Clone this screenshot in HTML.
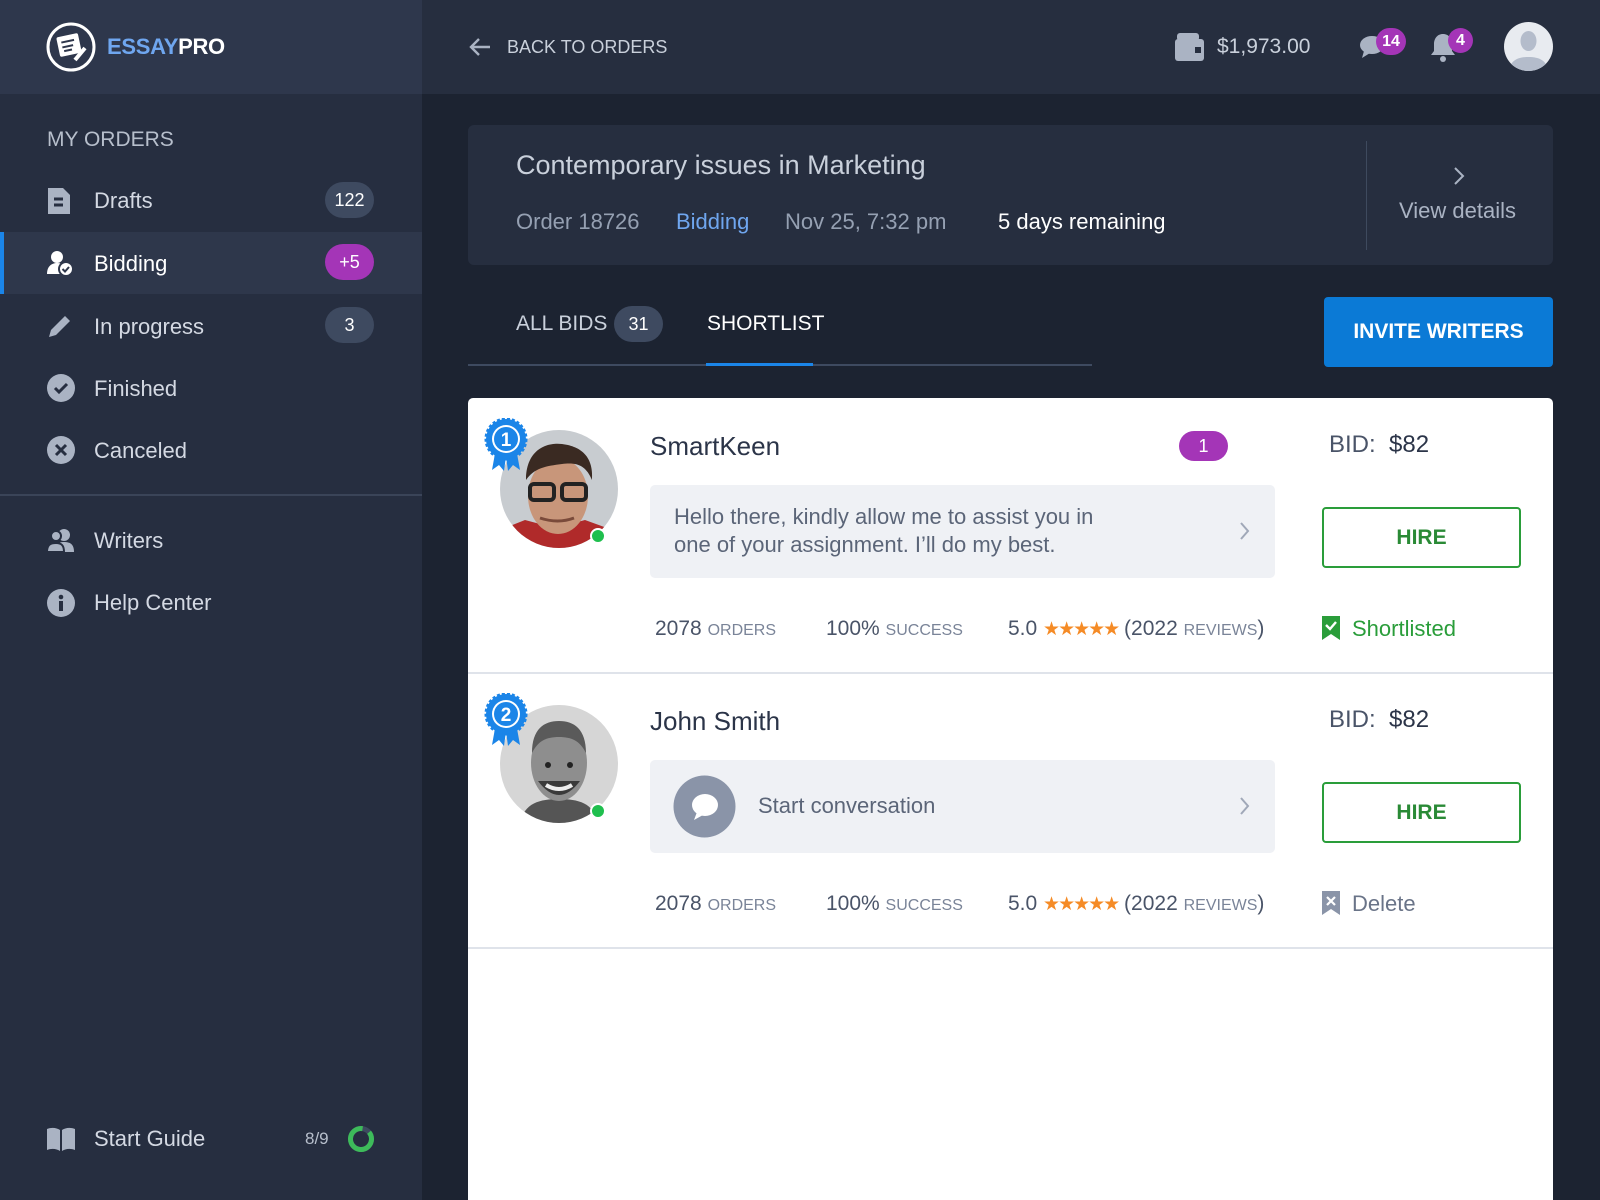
<!DOCTYPE html>
<html><head><meta charset="utf-8"><style>
*{margin:0;padding:0;box-sizing:border-box}
html,body{width:1600px;height:1200px;overflow:hidden}
body{background:#1c2331;font-family:"Liberation Sans",sans-serif;position:relative}
.a{position:absolute;white-space:nowrap}
.side{position:absolute;left:0;top:0;width:422px;height:1200px;background:#262e40}
.mi{position:absolute;left:94px;font-size:22px;color:#d4d9e3;transform:translateY(-50%)}
.bdg{position:absolute;left:325px;width:49px;height:36px;border-radius:18px;background:#3e4a60;color:#fff;font-size:18px;text-align:center;line-height:36px;transform:translateY(-50%)}
.ic{position:absolute;left:47px;transform:translateY(-50%)}
.st{font-size:21px;color:#4a5468}
.st span.s{font-size:16px;color:#7a8498}
</style></head><body>
<div class="side"></div>
<div class="a" style="left:0;top:0;width:422px;height:94px;background:#2e374c"></div>
<div class="a" style="left:422px;top:0;width:1178px;height:94px;background:#262e3f"></div>
<svg class="a" style="left:46px;top:22px" width="50" height="50" viewBox="0 0 50 50"><circle cx="25" cy="25" r="23" fill="none" stroke="#fff" stroke-width="3"/><rect x="12" y="13" width="22" height="20" rx="2" fill="#fff" transform="rotate(-12 23 23)"/><path d="M16 19h13M16 24h11M17 28h8" stroke="#2e374c" stroke-width="2" transform="rotate(-12 23 23)"/><path d="M29 38l10-12" stroke="#fff" stroke-width="4"/></svg>
<div class="a" style="left:107px;top:34px;font-size:22px;font-weight:bold;letter-spacing:-0.3px"><span style="color:#6fa6ef">ESSAY</span><span style="color:#fff">PRO</span></div>
<div class="a" style="left:47px;top:128px;font-size:21px;color:#b7bfcc">MY ORDERS</div>
<div class="a" style="left:0;top:232px;width:422px;height:62px;background:#2e374b"></div>
<div class="a" style="left:0;top:232px;width:4px;height:62px;background:#1b85e8"></div>
<svg class="ic" style="top:201px" width="24" height="28" viewBox="0 0 24 28"><path d="M1 1h15l7 7v19H1z" fill="#aab3c3"/><path d="M7 12h9M7 18h9" stroke="#262e40" stroke-width="3"/></svg>
<div class="mi" style="top:201px">Drafts</div><div class="bdg" style="top:200px">122</div>
<svg class="ic" style="top:263px" width="26" height="26" viewBox="0 0 26 26"><circle cx="10" cy="7" r="6" fill="#fff"/><path d="M0 24c0-8 5-11 10-11s7 2 7 2v9z" fill="#fff"/><circle cx="19" cy="19" r="7" fill="#fff" stroke="#2e374b" stroke-width="2"/><path d="M15.5 19l2.5 2.5 4-4.5" stroke="#2e374b" stroke-width="2" fill="none"/></svg>
<div class="mi" style="top:264px;color:#fff">Bidding</div><div class="bdg" style="top:262px;background:#a435b7">+5</div>
<svg class="ic" style="top:326px" width="26" height="26" viewBox="0 0 26 26"><path d="M2 24l2-7L18 3l5 5L9 22z" fill="#aab3c3"/></svg>
<div class="mi" style="top:327px">In progress</div><div class="bdg" style="top:325px">3</div>
<svg class="ic" style="top:388px" width="28" height="28" viewBox="0 0 28 28"><circle cx="14" cy="14" r="14" fill="#aab3c3"/><path d="M8 14l4 4 8-8" stroke="#262e40" stroke-width="3" fill="none"/></svg>
<div class="mi" style="top:389px">Finished</div>
<svg class="ic" style="top:450px" width="28" height="28" viewBox="0 0 28 28"><circle cx="14" cy="14" r="14" fill="#aab3c3"/><path d="M9 9l10 10M19 9L9 19" stroke="#262e40" stroke-width="3"/></svg>
<div class="mi" style="top:451px">Canceled</div>
<div class="a" style="left:0;top:494px;width:422px;height:2px;background:#3a4458"></div>
<svg class="ic" style="top:540px" width="28" height="24" viewBox="0 0 28 24"><circle cx="17" cy="7" r="6" fill="#aab3c3"/><path d="M7 24c0-8 4-10 10-10s10 2 10 10z" fill="#aab3c3"/><circle cx="9" cy="8" r="5" fill="#aab3c3" stroke="#262e40" stroke-width="2"/><path d="M0 24c0-7 3-9 9-9s8 3 8 9z" fill="#aab3c3" stroke="#262e40" stroke-width="2"/></svg>
<div class="mi" style="top:541px">Writers</div>
<svg class="ic" style="top:603px" width="28" height="28" viewBox="0 0 28 28"><circle cx="14" cy="14" r="14" fill="#aab3c3"/><rect x="12" y="12" width="4" height="10" fill="#262e40"/><circle cx="14" cy="8" r="2.3" fill="#262e40"/></svg>
<div class="mi" style="top:603px">Help Center</div>
<svg class="ic" style="top:1139px" width="28" height="24" viewBox="0 0 28 24"><path d="M0 2c5-2 10-1 13 1v21c-3-2-8-3-13-1zM15 3c3-2 8-3 13-1v21c-5-2-10-1-13 1z" fill="#aab3c3"/></svg>
<div class="mi" style="top:1139px">Start Guide</div>
<div class="a" style="left:305px;top:1129px;font-size:17px;color:#b7bfcc">8/9</div>
<svg class="a" style="left:347px;top:1125px" width="28" height="28" viewBox="0 0 28 28"><circle cx="14" cy="14" r="10.5" fill="none" stroke="#3e4a60" stroke-width="5"/><circle cx="14" cy="14" r="10.5" fill="none" stroke="#3dbb5a" stroke-width="5" stroke-dasharray="58 66" transform="rotate(-40 14 14)"/></svg>
<svg class="a" style="left:468px;top:37px" width="24" height="20" viewBox="0 0 24 20"><path d="M22 10H3M11 2L3 10l8 8" stroke="#aab3c3" stroke-width="2.4" fill="none"/></svg>
<div class="a" style="left:507px;top:37px;font-size:18px;color:#c9d0db">BACK TO ORDERS</div>
<svg class="a" style="left:1175px;top:33px" width="29" height="28" viewBox="0 0 29 28"><rect x="0" y="6" width="29" height="22" rx="3" fill="#aab3c3"/><rect x="2" y="0" width="22" height="8" rx="3" fill="#aab3c3"/><rect x="20" y="14" width="6" height="6" fill="#262e3f"/></svg>
<div class="a" style="left:1217px;top:35px;font-size:21px;color:#c9d0db">$1,973.00</div>
<svg class="a" style="left:1359px;top:33px" width="26" height="26" viewBox="0 0 26 26"><ellipse cx="13" cy="12" rx="12" ry="9" fill="#aab3c3"/><path d="M5 18l-2 7 8-5z" fill="#aab3c3"/></svg>
<div class="a" style="left:1376px;top:28px;width:30px;height:27px;border-radius:14px;background:#a435b7;color:#fff;font-size:16px;font-weight:bold;text-align:center;line-height:27px">14</div>
<svg class="a" style="left:1430px;top:32px" width="26" height="30" viewBox="0 0 26 30"><path d="M13 2c-6 0-9 5-9 10v7l-3 4h24l-3-4v-7c0-5-3-10-9-10z" fill="#aab3c3"/><circle cx="13" cy="27" r="3" fill="#aab3c3"/></svg>
<div class="a" style="left:1448px;top:28px;width:25px;height:25px;border-radius:13px;background:#a435b7;color:#fff;font-size:16px;font-weight:bold;text-align:center;line-height:25px">4</div>
<svg class="a" style="left:1503px;top:21px" width="51" height="51" viewBox="0 0 51 51"><defs><clipPath id="cc"><circle cx="25.5" cy="25.5" r="24.5"/></clipPath></defs><circle cx="25.5" cy="25.5" r="24.5" fill="#e8ebf0"/><g clip-path="url(#cc)" fill="#b4bccb"><ellipse cx="25.5" cy="20" rx="8" ry="10"/><path d="M6 52c0-12 8-16 19.5-16S45 40 45 52z"/></g></svg>
<div class="a" style="left:468px;top:125px;width:1085px;height:140px;border-radius:6px;background:#262e3f"></div>
<div class="a" style="left:516px;top:150px;font-size:27px;color:#c9d0db">Contemporary issues in Marketing</div>
<div class="a" style="left:516px;top:209px;font-size:22px;color:#95a0b2">Order 18726</div>
<div class="a" style="left:676px;top:209px;font-size:22px;color:#6fa6ef">Bidding</div>
<div class="a" style="left:785px;top:209px;font-size:22px;color:#95a0b2">Nov 25, 7:32 pm</div>
<div class="a" style="left:998px;top:209px;font-size:22px;color:#fff">5 days remaining</div>
<div class="a" style="left:1366px;top:141px;width:1px;height:109px;background:#3e4a5e"></div>
<svg class="a" style="left:1452px;top:165px" width="14" height="22" viewBox="0 0 14 22"><path d="M3 3l8 8-8 8" stroke="#aab3c3" stroke-width="2" fill="none"/></svg>
<div class="a" style="left:1399px;top:198px;font-size:22px;color:#aab3c3">View details</div>
<div class="a" style="left:516px;top:312px;font-size:21px;color:#c9d0db">ALL BIDS</div>
<div class="a" style="left:614px;top:306px;width:49px;height:36px;border-radius:18px;background:#3e4a60;color:#fff;font-size:18px;text-align:center;line-height:36px">31</div>
<div class="a" style="left:707px;top:312px;font-size:21px;color:#fff">SHORTLIST</div>
<div class="a" style="left:468px;top:364px;width:624px;height:2px;background:#3e4a60"></div>
<div class="a" style="left:706px;top:363px;width:107px;height:3px;background:#1b85e8"></div>
<div class="a" style="left:1324px;top:297px;width:229px;height:70px;border-radius:4px;background:#0b7ad6;color:#fff;font-size:21px;font-weight:bold;text-align:center;line-height:70px">INVITE WRITERS</div>
<div class="a" style="left:468px;top:398px;width:1085px;height:820px;border-radius:5px;background:#fff"></div>
<div class="a" style="left:468px;top:672px;width:1085px;height:2px;background:#dfe3ea"></div>
<div class="a" style="left:468px;top:947px;width:1085px;height:2px;background:#dfe3ea"></div>

<svg class="a" style="left:500px;top:430px" width="118" height="118" viewBox="0 0 118 118"><defs><clipPath id="a1"><circle cx="59" cy="59" r="59"/></clipPath></defs><g clip-path="url(#a1)"><rect width="118" height="118" fill="#c8ccd0"/><path d="M0 118V100l25-10 30 8 30-8 33 12v16z" fill="#b02a2a"/><ellipse cx="58" cy="66" rx="30" ry="38" fill="#c8967a"/><path d="M26 50c0-30 20-38 36-36s32 10 30 36c-6-14-14-18-30-16s-28 4-36 16z" fill="#3a2a22"/><rect x="30" y="54" width="24" height="16" rx="4" fill="none" stroke="#222" stroke-width="4"/><rect x="62" y="54" width="24" height="16" rx="4" fill="none" stroke="#222" stroke-width="4"/><path d="M40 88q18 6 34 0" stroke="#7a4a3a" stroke-width="3" fill="none"/></g></svg>
<div class="a" style="left:590px;top:528px;width:16px;height:16px;border-radius:50%;background:#1fbf4e;border:2px solid #fff"></div>
<svg class="a" style="left:500px;top:705px" width="118" height="118" viewBox="0 0 118 118"><defs><clipPath id="a2"><circle cx="59" cy="59" r="59"/></clipPath></defs><g clip-path="url(#a2)"><rect width="118" height="118" fill="#d6d6d6"/><path d="M20 118c4-20 20-24 39-24s35 4 39 24z" fill="#555"/><ellipse cx="59" cy="58" rx="28" ry="38" fill="#8e8e8e"/><path d="M32 48c0-24 12-32 27-32s27 8 27 32c-6-12-14-16-27-16s-21 4-27 16z" fill="#5a5a5a"/><path d="M38 76q21 28 42 0" fill="#3a3a3a"/><path d="M46 80q13 8 26 0" stroke="#eee" stroke-width="4" fill="none"/><circle cx="48" cy="60" r="3" fill="#222"/><circle cx="70" cy="60" r="3" fill="#222"/></g></svg>
<div class="a" style="left:590px;top:803px;width:16px;height:16px;border-radius:50%;background:#1fbf4e;border:2px solid #fff"></div>

<svg class="a" style="left:484px;top:418px" width="44" height="54" viewBox="0 0 44 54"><path d="M12 30l-4 22 7-5 5 6 3-22zM32 30l4 22-7-5-5 6-3-22z" fill="#1b85e8"/><circle cx="22" cy="21" r="20" fill="#1b85e8" stroke="#1b85e8" stroke-width="3" stroke-dasharray="3 2"/><circle cx="22" cy="21" r="14" fill="#fff"/><circle cx="22" cy="21" r="12" fill="#1b85e8"/><text x="22" y="28" font-size="19" font-weight="bold" fill="#fff" text-anchor="middle" font-family="Liberation Sans">1</text></svg>
<svg class="a" style="left:484px;top:693px" width="44" height="54" viewBox="0 0 44 54"><path d="M12 30l-4 22 7-5 5 6 3-22zM32 30l4 22-7-5-5 6-3-22z" fill="#1b85e8"/><circle cx="22" cy="21" r="20" fill="#1b85e8" stroke="#1b85e8" stroke-width="3" stroke-dasharray="3 2"/><circle cx="22" cy="21" r="14" fill="#fff"/><circle cx="22" cy="21" r="12" fill="#1b85e8"/><text x="22" y="28" font-size="19" font-weight="bold" fill="#fff" text-anchor="middle" font-family="Liberation Sans">2</text></svg>

<div class="a" style="left:650px;top:431px;font-size:26px;color:#2b3448">SmartKeen</div>
<div class="a" style="left:1179px;top:431px;width:49px;height:30px;border-radius:15px;background:#a435b7;color:#fff;font-size:18px;text-align:center;line-height:30px">1</div>
<div class="a" style="left:1329px;top:431px;font-size:24px;color:#4a5468">BID:&nbsp; <span style="color:#2b3448">$82</span></div>
<div class="a" style="left:650px;top:485px;width:625px;height:93px;border-radius:5px;background:#eff1f5"></div>
<div class="a" style="left:674px;top:503px;font-size:22px;color:#5b6578;line-height:28px">Hello there, kindly allow me to assist you in<br>one of your assignment. I’ll do my best.</div>
<svg class="a" style="left:1239px;top:521px" width="12" height="20" viewBox="0 0 12 20"><path d="M2 2l7 8-7 8" stroke="#a0a8b8" stroke-width="2" fill="none"/></svg>
<div class="a" style="left:1322px;top:507px;width:199px;height:61px;border:2px solid #2a9d3a;border-radius:4px;color:#2a8a36;font-size:21px;font-weight:bold;text-align:center;line-height:57px">HIRE</div>
<div class="a st" style="left:655px;top:617px">2078 <span class="s">ORDERS</span></div>
<div class="a st" style="left:826px;top:617px">100% <span class="s">SUCCESS</span></div>
<div class="a st" style="left:1008px;top:617px">5.0 <span style="color:#f58b26;font-size:19px;letter-spacing:-2px">★★★★★</span> (2022 <span class="s">REVIEWS</span>)</div>
<svg class="a" style="left:1322px;top:616px" width="18" height="24" viewBox="0 0 18 24"><path d="M0 0h18v24l-9-6-9 6z" fill="#2a9d3a"/><path d="M4 9l4 4 6-7" stroke="#fff" stroke-width="2.4" fill="none"/></svg>
<div class="a" style="left:1352px;top:616px;font-size:22px;color:#2a9d3a">Shortlisted</div>

<div class="a" style="left:650px;top:706px;font-size:26px;color:#2b3448">John Smith</div>
<div class="a" style="left:1329px;top:706px;font-size:24px;color:#4a5468">BID:&nbsp; <span style="color:#2b3448">$82</span></div>
<div class="a" style="left:650px;top:760px;width:625px;height:93px;border-radius:5px;background:#eff1f5"></div>
<svg class="a" style="left:673px;top:775px" width="63" height="63" viewBox="0 0 63 63"><circle cx="31.5" cy="31.5" r="31" fill="#8a94a8"/><ellipse cx="32" cy="30" rx="13" ry="11" fill="#fff"/><path d="M24 37l-3 8 9-5z" fill="#fff"/></svg>
<div class="a" style="left:758px;top:793px;font-size:22px;color:#5b6578">Start conversation</div>
<svg class="a" style="left:1239px;top:796px" width="12" height="20" viewBox="0 0 12 20"><path d="M2 2l7 8-7 8" stroke="#a0a8b8" stroke-width="2" fill="none"/></svg>
<div class="a" style="left:1322px;top:782px;width:199px;height:61px;border:2px solid #2a9d3a;border-radius:4px;color:#2a8a36;font-size:21px;font-weight:bold;text-align:center;line-height:57px">HIRE</div>
<div class="a st" style="left:655px;top:892px">2078 <span class="s">ORDERS</span></div>
<div class="a st" style="left:826px;top:892px">100% <span class="s">SUCCESS</span></div>
<div class="a st" style="left:1008px;top:892px">5.0 <span style="color:#f58b26;font-size:19px;letter-spacing:-2px">★★★★★</span> (2022 <span class="s">REVIEWS</span>)</div>
<svg class="a" style="left:1322px;top:891px" width="18" height="24" viewBox="0 0 18 24"><path d="M0 0h18v24l-9-6-9 6z" fill="#8a94a8"/><path d="M5 6l8 8M13 6l-8 8" stroke="#fff" stroke-width="2.2"/></svg>
<div class="a" style="left:1352px;top:891px;font-size:22px;color:#6a7488">Delete</div>
</body></html>
